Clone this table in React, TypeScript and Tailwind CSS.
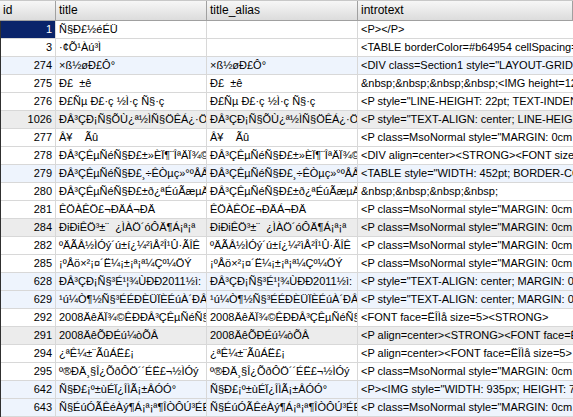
const rows: { id: string; title: string; alias: string; intro: string; tone?: "blue" | "grey" }[] = [
  { id: "1", title: "Ñ§Ð£½éÉÜ", alias: "", intro: "<P></P>" },
  { id: "3", title: "·¢Õ¹Àú³Ì", alias: "", intro: "<TABLE borderColor=#b64954 cellSpacing=0 cellPadding=0" },
  { id: "274", title: "×ß½øÐ£Ô°", alias: "×ß½øÐ£Ô°", intro: '<DIV class=Section1 style="LAYOUT-GRID: 15.6pt none">', tone: "blue" },
  { id: "275", title: "Ð£  ±ê", alias: "Ð£  ±ê", intro: "&nbsp;&nbsp;&nbsp;&nbsp;<IMG height=120" },
  { id: "276", title: "Ð£Ñµ Ð£·ç ½Ì·ç Ñ§·ç", alias: "Ð£Ñµ Ð£·ç ½Ì·ç Ñ§·ç", intro: '<P style="LINE-HEIGHT: 22pt; TEXT-INDENT: 24pt">' },
  { id: "1026", title: "ÐÂ³ÇÐ¡Ñ§ÕÙ¿ª½ÌÑ§ÖÊÁ¿·ÖÎö", alias: "ÐÂ³ÇÐ¡Ñ§ÕÙ¿ª½ÌÑ§ÖÊÁ¿·ÖÎö", intro: '<P style="TEXT-ALIGN: center; LINE-HEIGHT: 150%">', tone: "grey" },
  { id: "277", title: "Â¥    Ãû", alias: "Â¥    Ãû", intro: '<P class=MsoNormal style="MARGIN: 0cm 0cm 0pt">' },
  { id: "278", title: "ÐÂ³ÇÊµÑéÑ§Ð£±»ÈÏ¶¨ÎªÄÏ¾©", alias: "ÐÂ³ÇÊµÑéÑ§Ð£±»ÈÏ¶¨ÎªÄÏ¾©", intro: "<DIV align=center><STRONG><FONT size=4>" },
  { id: "279", title: "ÐÂ³ÇÊµÑéÑ§Ð£¸÷ÊÒµç»°ºÅÂë", alias: "ÐÂ³ÇÊµÑéÑ§Ð£¸÷ÊÒµç»°ºÅÂë", intro: '<TABLE style="WIDTH: 452pt; BORDER-COLLAPSE: collapse">', tone: "blue" },
  { id: "280", title: "ÐÂ³ÇÊµÑéÑ§Ð£±ð¿ªÉúÃæµÄ", alias: "ÐÂ³ÇÊµÑéÑ§Ð£±ð¿ªÉúÃæµÄ", intro: "&nbsp;&nbsp;&nbsp;&nbsp;" },
  { id: "281", title: "ÊÖÀ­ÊÖ£¬ÐÄÁ¬ÐÄ", alias: "ÊÖÀ­ÊÖ£¬ÐÄÁ¬ÐÄ", intro: '<P class=MsoNormal style="MARGIN: 0cm 0cm 0pt">' },
  { id: "284", title: "ÐiÐiÊÖ³­±¨  ¿ÌÀÖ´óÔÄ¶Á¡ª¡ª", alias: "ÐiÐiÊÖ³­±¨  ¿ÌÀÖ´óÔÄ¶Á¡ª¡ª", intro: '<P class=MsoNormal style="MARGIN: 0cm 0cm 0pt">', tone: "grey" },
  { id: "282", title: "ºÄÃÂ½ÌÓý´ú±í¿¼²ìÅ²Î¹Û·ÃÎÊ", alias: "ºÄÃÂ½ÌÓý´ú±í¿¼²ìÅ²Î¹Û·ÃÎÊ", intro: '<P class=MsoNormal style="MARGIN: 0cm 0cm 0pt">' },
  { id: "285", title: "¡ºÅö×²¡¤´Ë¼¡±¡ª¡ª¼Çº¼ÖÝ", alias: "¡ºÅö×²¡¤´Ë¼¡±¡ª¡ª¼Çº¼ÖÝ", intro: '<P class=MsoNormal style="MARGIN: 0cm 0cm 0pt">' },
  { id: "628", title: "ÐÂ³ÇÐ¡Ñ§³É¹¦¾ÙÐÐ2011½ì:", alias: "ÐÂ³ÇÐ¡Ñ§³É¹¦¾ÙÐÐ2011½ì:", intro: '<P style="TEXT-ALIGN: center; MARGIN: 0cm">', tone: "blue" },
  { id: "629", title: "¹ú¼Ò¶½Ñ§³ÉÉÐÈÜÏÈÉúÀ´ÐÂ", alias: "¹ú¼Ò¶½Ñ§³ÉÉÐÈÜÏÈÉúÀ´ÐÂ", intro: '<P style="TEXT-ALIGN: center; MARGIN: 0cm">', tone: "blue" },
  { id: "292", title: "2008ÄêÄÏ¾©ÊÐÐÂ³ÇÊµÑéÑ§", alias: "2008ÄêÄÏ¾©ÊÐÐÂ³ÇÊµÑéÑ§", intro: "<FONT face=ËÎÌå size=5><STRONG>" },
  { id: "291", title: "2008ÄêÕÐÉú¼òÕÂ", alias: "2008ÄêÕÐÉú¼òÕÂ", intro: "<P align=center><STRONG><FONT face=ËÎÌå", tone: "grey" },
  { id: "294", title: "¿ªÊ¼±¨ÃûÁË£¡", alias: "¿ªÊ¼±¨ÃûÁË£¡", intro: "<P align=center><FONT face=ËÎÌå size=5>" },
  { id: "295", title: "º®ÐÄ¸§Î¿ÕðÔÖ´´ÉË£¬½ÌÓý", alias: "º®ÐÄ¸§Î¿ÕðÔÖ´´ÉË£¬½ÌÓý", intro: '<P class=MsoNormal style="MARGIN: 0cm 0cm 0pt">' },
  { id: "642", title: "Ñ§Ð£¡º±ùÉÏ¿ÎÌÃ¡±ÂÓÓ°", alias: "Ñ§Ð£¡º±ùÉÏ¿ÎÌÃ¡±ÂÓÓ°", intro: '<P><IMG style="WIDTH: 935px; HEIGHT: 700px"', tone: "blue" },
  { id: "643", title: "Ñ§ÉúÓÃÊéÀý¶Á¡ª¡ª¶ÎÒÔÚ³ÉÉú", alias: "Ñ§ÉúÓÃÊéÀý¶Á¡ª¡ª¶ÎÒÔÚ³ÉÉú", intro: '<P class=MsoNormal style="MARGIN: 0cm 0cm 0pt">', tone: "blue" },
]

const cell = "h-[18px] overflow-hidden whitespace-pre border-r border-b border-[#d8d8d8] px-[3px] leading-[17px]"
const head = "h-[20px] overflow-hidden whitespace-nowrap border-r border-b border-[#a0a0a0] px-[3px] leading-[19px] text-[12px] bg-gradient-to-b from-[#f7f7f7] to-[#dcdcdc]"

export default function App() {
  return (
    <div
      className="w-[573px] h-[417px] overflow-hidden bg-white text-[11px] text-black"
      style={{ fontFamily: '"Liberation Sans", Arial, sans-serif' }}
    >
      <div className="grid grid-cols-[56px_151px_151px_1fr] border-t border-[#c8c8c8]">
        <div className={head}>id</div>
        <div className={head}>title</div>
        <div className={head}>title_alias</div>
        <div className={head}>introtext</div>
      </div>
      <div className="border-l border-[#303030]">
        {rows.map((r, i) => {
          const bg =
            r.tone === "blue" ? "bg-[#eef4fd]" : r.tone === "grey" ? "bg-[#ececec]" : "bg-white"
          return (
            <div key={r.id} className={`grid grid-cols-[55px_151px_151px_1fr] ${bg}`}>
              <div
                className={`${cell} text-right ${i === 0 ? "bg-[#0a246a] text-white" : ""}`}
              >
                {r.id}
              </div>
              <div className={cell}>{r.title}</div>
              <div className={cell}>{r.alias}</div>
              <div className={`${cell} border-r-0`}>{r.intro}</div>
            </div>
          )
        })}
      </div>
    </div>
  )
}
